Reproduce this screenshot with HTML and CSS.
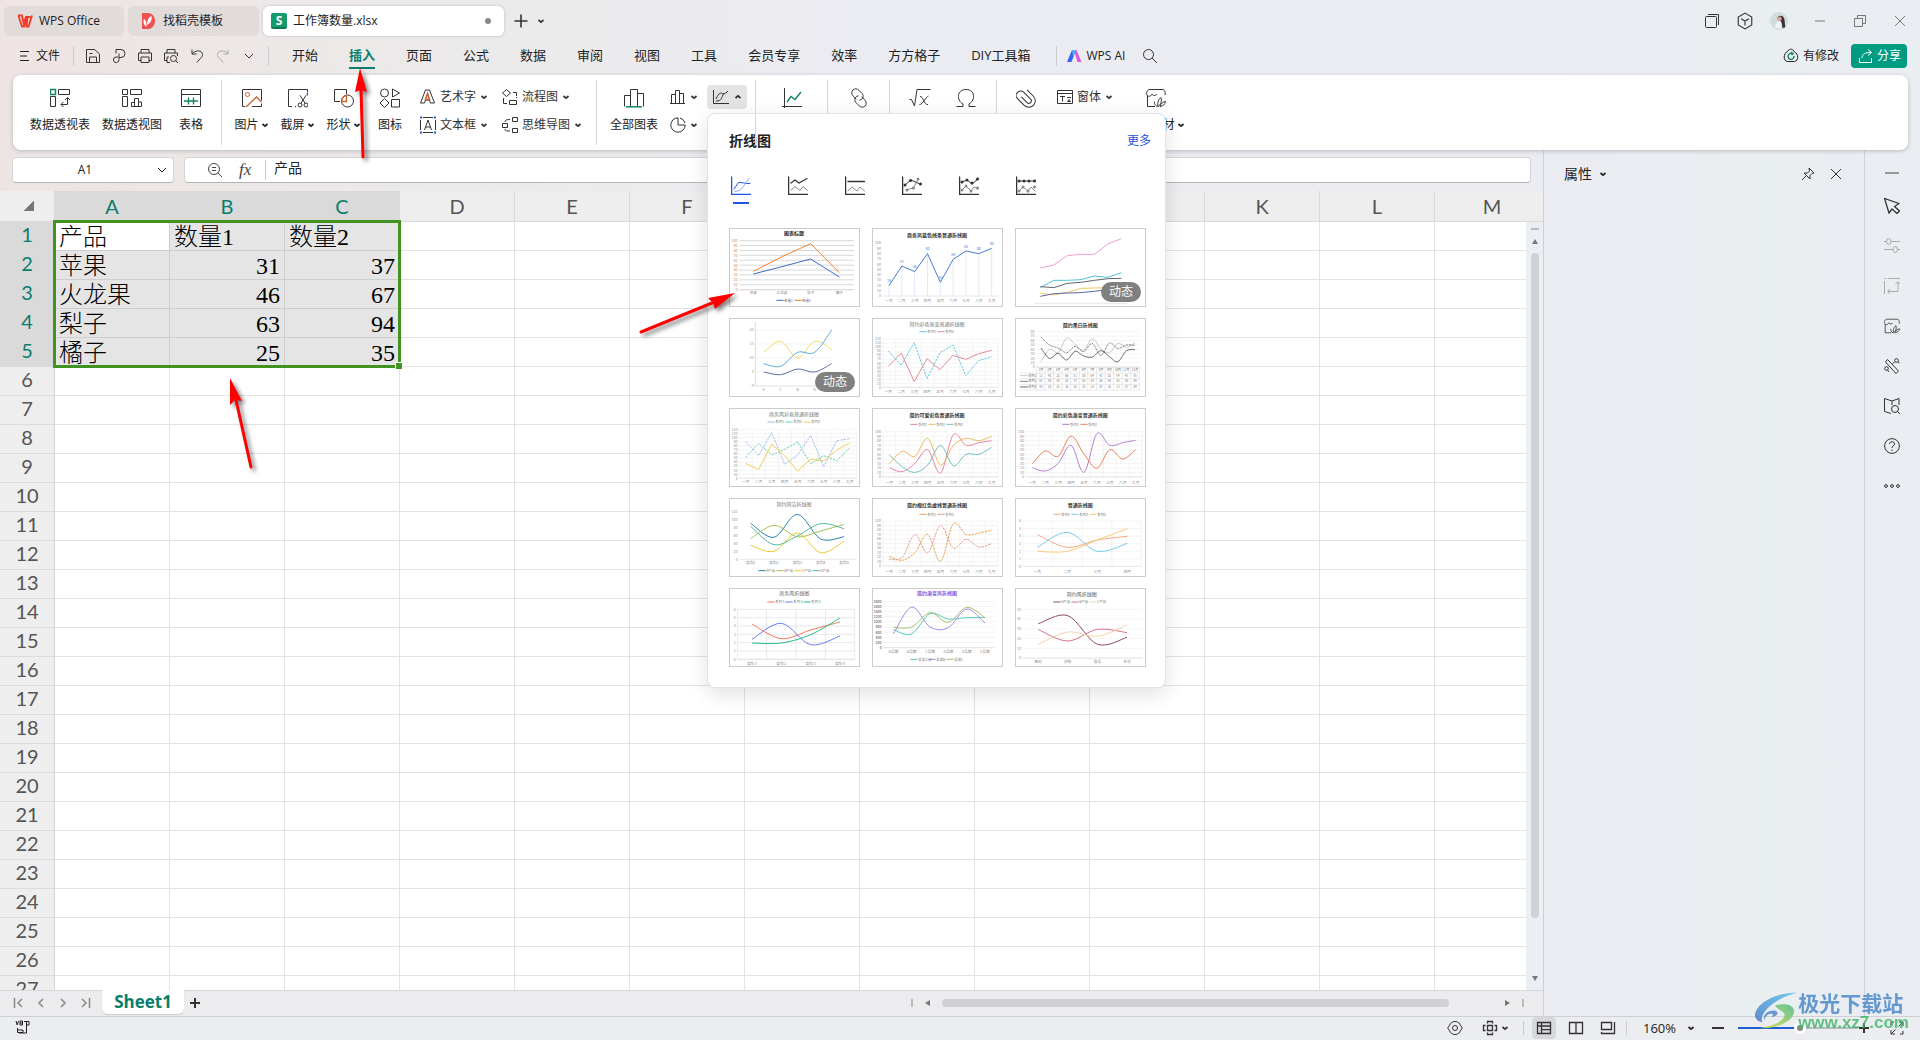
FILE: index.html
```html
<!DOCTYPE html>
<html lang="zh-CN">
<head>
<meta charset="utf-8">
<title>工作簿数量.xlsx</title>
<link rel="stylesheet" href="styles.css">
</head>
<body>
<svg class="sprite" aria-hidden="true">
  <symbol id="chev" viewBox="0 0 10 10"><path d="M2.5 4 5 6.200 7.500 4" stroke-width="1.700"/></symbol>
  <symbol id="chev-up" viewBox="0 0 10 10"><path d="M2.500 6 5 3.800 7.500 6" stroke-width="1.700"/></symbol>
  <symbol id="chev-wide" viewBox="0 0 10 10"><path d="M1 3 5 7 9 3"/></symbol>
  <symbol id="plus" viewBox="0 0 16 16"><path d="M8 1.500v13M1.500 8h13" stroke-width="1.600"/></symbol>
  <symbol id="menu" viewBox="0 0 16 16"><path d="M4 3.500h9M4 8h7M4 12.500h9"/></symbol>
  <symbol id="save" viewBox="0 0 16 16"><path d="M1.500 14.500v-13h8l5 4.500v8.500zM4.500 14v-5h7v5M4.500 5.500h3"/></symbol>
  <symbol id="export" viewBox="0 0 16 16"><path d="M5 5.500V1.500h5a4 4 0 0 1 0 8H8M8 5.500v6a2.800 2.800 0 1 1-3-2.500h2"/></symbol>
  <symbol id="print" viewBox="0 0 16 16"><path d="M4 5V1.500h8V5M4 12.500H1.500V5h13v7.500H12M4 9h8v5.500H4z"/></symbol>
  <symbol id="preview" viewBox="0 0 16 16"><path d="M4 5V1.500h8V5M4 12.500H1.500V5h13v3M7 14.500H4V9h2"/><circle cx="10.500" cy="10.500" r="3"/><path d="m12.700 12.700 2.300 2.300"/></symbol>
  <symbol id="undo" viewBox="0 0 16 16"><path d="M3 1.500V6h4.500M3 6c3-4 10-4.500 10.500.500.200 3-3 4-5.500 8"/></symbol>
  <symbol id="redo" viewBox="0 0 16 16"><path d="M13 1.500V6H8.500M13 6C10 2 3 1.500 2.500 6.500c-.2 3 3 4 5.500 8"/></symbol>
  <symbol id="search" viewBox="0 0 16 16"><circle cx="6.500" cy="6.500" r="5"/><path d="m10 10 5 5"/></symbol>
  <symbol id="pivot" viewBox="0 0 20 20"><g><path d="M8.500 1.500h11v5h-11zM.500 8.500h5v10h-5z"/><path d="M11 16.500h6.500v-7M15 12l2.500-2.500L20 12M13.500 14 11 16.500l2.500 2.500"/></g><path d="M.500 1.500h5v5h-5z" stroke="#138463" stroke-width="1.500"/></symbol>
  <symbol id="pivotchart" viewBox="0 0 20 20"><path d="M.500 1.500h5v5h-5zM8.500 1.500h11v5h-11zM.500 8.500h5v10h-5zM9.500 18.500v-4h3v-4h4v4M9.500 18.500h10v-4.500h-3v4.500M12.500 14v4.500"/></symbol>
  <symbol id="table" viewBox="0 0 20 20"><path d="M.500 1.500h19v17H.500zM.500 6.500h19"/><path d="M3 13h14M7.500 9.500v7M12.500 9.500v7" stroke="#138463" stroke-width="1.400"/></symbol>
  <symbol id="picture" viewBox="0 0 20 20"><path d="M3 18.500H.500v-17h19v11M10 18.500h9.500v-3"/><circle cx="5.500" cy="6.500" r="2" stroke="#c95f2b"/><path d="m4 19 10.500-10 5 5" stroke="#c95f2b" stroke-width="1.300"/></symbol>
  <symbol id="crop" viewBox="0 0 20 20"><path d="M4 18.500H.500v-17h19v3"/><path d="M7 18.500h1M19.500 5v2.500" stroke="#2459e0" stroke-width="1.600"/><circle cx="12" cy="17" r="2"/><circle cx="18" cy="17" r="2"/><path d="m13 15.300 5-8M17 15.300l-5-8"/></symbol>
  <symbol id="shapes" viewBox="0 0 20 20"><path d="M6 13.500H.500v-12h12V6"/><circle cx="13.500" cy="13" r="6"/><path d="M7.500 13.500a6 6 0 0 1 5-6v6z" stroke="#c95f2b" stroke-width="1.300"/></symbol>
  <symbol id="icons" viewBox="0 0 20 20"><circle cx="4.500" cy="5" r="4"/><path d="M12.500 1v8l7-4zM4.500 10.500l4.500 4.500-4.500 4.500L0 15zM11.500 11.500h8v7.500h-8z"/></symbol>
  <symbol id="wordart" viewBox="0 0 18 18"><path d="M6.500 2h4l5 13h-4l-1-3h-4l-1 3h-4z"/><path d="m8.500 5.500 2 6h-4z" stroke="#c95f2b" stroke-width="1.500"/></symbol>
  <symbol id="textbox" viewBox="0 0 18 18"><path d="M4 1.500h10M4 16.500h10M1.500 4v10M16.500 4v10M5.500 14 9 4l3.500 10M6.500 11h5"/><path d="M1 1.500h2M15 1.500h2M1 16.500h2M15 16.500h2" stroke="#2459e0" stroke-width="2"/></symbol>
  <symbol id="flow" viewBox="0 0 18 18"><path d="m5.500 1.500 4 3.500-4 3.500-4-3.500zM12 4.500h3.500V8M2.500 10v5.500H6M8.500 12.500h7v4h-7zM15.500 9v1"/></symbol>
  <symbol id="mind" viewBox="0 0 18 18"><path d="M1.500 7.500h5v4h-5zM11.500 1.500h5v4h-5zM11.500 12.500h5v4h-5zM4 6c0-2 2-2.500 5-2.500M4 13c0 2 2 2 5 2"/></symbol>
  <symbol id="bars" viewBox="0 0 20 20"><path d="M.500 18.500v-11h6M6.500 18.500v-17h7v17M13.500 5.500h6v13"/><path d="M2 18.800h16" stroke="#138463" stroke-width="1.500"/></symbol>
  <symbol id="bars-s" viewBox="0 0 16 16"><path d="M1.500 14.500v-9h4M5.500 14.500v-13h4v13M9.500 4.500h4v10M0 14.500h15"/></symbol>
  <symbol id="pie" viewBox="0 0 16 16"><path d="M8 .800a7.200 7.200 0 1 0 7.200 7.200H8zM10 1a7 7 0 0 1 5 5"/></symbol>
  <symbol id="line-s" viewBox="0 0 18 16"><path d="M1.500 1v13.500H17M4 10c3-7 5-6 6-5.500s3 1 6-2.500M4 12c6 0 5-3 8-8"/></symbol>
  <symbol id="spark" viewBox="0 0 20 20"><path d="M2.500 0v20M0 18.500h20"/><path d="m5 14 4-5.500 4 3L19 4" stroke="#138463" stroke-width="1.400"/></symbol>
  <symbol id="link" viewBox="0 0 22 22"><g transform="rotate(45 11 11)"><path d="M10 14H5a5 4.500 0 0 1 0-9h5a4.500 4.500 0 0 1 3 7.500"/><path d="M12 8h5a5 4.500 0 0 1 0 9h-5a4.500 4.500 0 0 1-3-7.500"/></g></symbol>
  <symbol id="sqrt" viewBox="0 0 22 20"><path d="M.500 11.500h2l3 6.500 2.500-16.500h13.500M11 8.500c3-1 4 9 8 8M19.500 8c-2 0-6 9-9 8.500"/></symbol>
  <symbol id="omega" viewBox="0 0 20 20"><path d="M.500 18.500h6.500v-2.500C0 12 1 1.500 10 1.500s10 10.500 3 14.500v2.500h6.500"/></symbol>
  <symbol id="clip" viewBox="0 0 20 20"><g transform="rotate(-45 10 10)"><path d="M7.500 6v8a2.500 2.500 0 0 0 5 0V4.500a4.500 4.500 0 0 0-9 0v9.500a6.500 6.500 0 0 0 13 0V5"/></g></symbol>
  <symbol id="form" viewBox="0 0 18 16"><path d="M1.500 1.500h15v13h-15zM1.500 4.500h15M4 7.500h5M6.500 7.500v5M11 8.500h4M11.500 12.500l1.500-2 1.500 2z"/></symbol>
  <symbol id="material" viewBox="0 0 20 20"><path d="M9 18.500H1.500V8C-.5 5 1 1.500 4 1.500h12c3 0 3.500 3 3 5.500M1.500 8c3 1 4-1 4.500-2 1 2 4 2 5 0M12 18.500c-1-4 1-8 3-9 1 3 0 7-3 9zM14 18.500c1-3 3-5 5.500-5-.5 3-3 5-5.500 5zM11.500 18.500c-3-1-3-3-3-5"/></symbol>
  <symbol id="zoomout" viewBox="0 0 16 16"><circle cx="7" cy="7" r="5.500"/><path d="M5 5.500h4M5 8.500h4M11 11l4 4"/></symbol>
  <symbol id="cube" viewBox="0 0 16 16"><path d="m8 1 6 3.500v7L8 15l-6-3.500v-7zM4.500 6 8 8l3.500-2M8 8v4"/></symbol>
  <symbol id="pages" viewBox="0 0 16 16"><rect x="1.500" y="3.500" width="11" height="11" rx="1"/><path d="M4 1.500h10.500V12"/></symbol>
  <symbol id="min" viewBox="0 0 16 16"><path d="M3 8h10"/></symbol>
  <symbol id="restore" viewBox="0 0 16 16"><path d="M2.500 5.500h8v8h-8zM5.500 5.500v-3h8v8h-3"/></symbol>
  <symbol id="close" viewBox="0 0 16 16"><path d="m3 3 10 10M13 3 3 13"/></symbol>
  <symbol id="pin" viewBox="0 0 16 16"><path d="m9 2 5 5-2 .500-2 2 0 3.500-6-6 3.500 0 2-2zM6 10l-4 4"/></symbol>
  <symbol id="cloud" viewBox="0 0 16 16"><path d="M5 3c2-3 5-2 6.500 1 4 1.500 4.500 9 0 9.500h-7C0 13 0 5.500 5 3z"/><path d="M9 5.500A3 3 0 1 0 11 8M8 4l2 1.500L8.500 7" stroke="#138463" stroke-width="1.400"/></symbol>
  <symbol id="share" viewBox="0 0 16 16"><path d="M1.500 10v4.500h12V10M4 10c0-4 3-5.500 9-5.500M10 1.500l3.500 3-3.500 3"/></symbol>
  <symbol id="cursor" viewBox="0 0 16 16"><path d="M.500.500 5 15l3-4 5 4.500 2.500-2.500-5-4.500 4.500-3z" stroke-width="1.300"/></symbol>
  <symbol id="sliders" viewBox="0 0 16 16"><path d="M0 3.500h2.500M7 3.500h9M0 11.500h9M13.500 11.500H16"/><ellipse cx="4.700" cy="3.500" rx="2.200" ry="3"/><ellipse cx="11.300" cy="11.500" rx="2.200" ry="3"/></symbol>
  <symbol id="resize" viewBox="0 0 16 16"><path d="M0 .500h1.500M3.500.500H16M.500 3v13M14 4v9.500H4M11.500 6 14 3.500 16 6M6 11l-2.500 2.500L6 16"/></symbol>
  <symbol id="tools" viewBox="0 0 16 16"><path d="m3.500 1.500 11 11.500-2.500 2.500L1.500 4z"/><path d="m8.500 6 2-2"/><circle cx="12.500" cy="2.500" r="1.800"/><circle cx="2.500" cy="10.500" r="1.800"/><path d="m3.500 12 1.500 2M14 4l1.500 1" /></symbol>
  <symbol id="book" viewBox="0 0 16 16"><path d="M8 3 .500.500v13L7 15.500M8 3l7-2.500V7M8 3v4"/><circle cx="11" cy="11" r="3.500"/><path d="m13.500 13.500 2.500 2.500"/></symbol>
  <symbol id="help" viewBox="0 0 16 16"><circle cx="8" cy="8" r="7.400"/><path d="M5.500 6c0-3 5-3 5 0 0 2-2.500 1.500-2.500 4M8 11.500V13"/></symbol>
  <symbol id="dots" viewBox="0 0 16 16"><circle cx="2" cy="8" r="1.400"/><circle cx="8" cy="8" r="1.400"/><circle cx="14" cy="8" r="1.400"/></symbol>
  <symbol id="vb" viewBox="0 0 16 16"><path d="m1 1 1.200 4L3.500 1M5 1v4h2.500V1zM5 3h2M9 1.500h5V5h-3M11.500 2v11H4M2.500 8v4.500h5.500V10H2.500"/></symbol>
  <symbol id="eye" viewBox="0 0 16 16"><path d="M.700 8 4 3c2-2 6-2 8 0l3.300 5L12 13c-2 2-6 2-8 0z"/><circle cx="8" cy="8" r="2.500"/></symbol>
  <symbol id="move" viewBox="0 0 16 16"><path d="M5.500 5.500h5v5h-5zM5.500 3.500v-2h5v2M5.500 12.500v2h5v-2M3.500 5.500h-2v5h2M12.500 5.500h2v5h-2" stroke-width="1.300"/></symbol>
  <symbol id="v1" viewBox="0 0 16 16"><path d="M1.500 2.500h13v11h-13zM1.500 6h13M5.500 2.500v11M5.500 9.700h9" stroke-width="1.300"/></symbol>
  <symbol id="v2" viewBox="0 0 16 16"><path d="M1.500 2.500h13v11h-13zM8 2.500v11" stroke-width="1.300"/></symbol>
  <symbol id="v3" viewBox="0 0 16 16"><path d="M1.500 2.500h10v7h-10zM14.500 2v11.500h-13V12" stroke-width="1.300"/></symbol>
  <symbol id="full" viewBox="0 0 16 16"><path d="M10 2h4v4M14 2l-4.500 4.500M6 14H2v-4M2 14l4.500-4.500M2 5V2h3M14 11v3h-3"/></symbol>
  <symbol id="t1" viewBox="0 0 20 20"><path d="M.600 1v17.400H20" stroke-width="1.300"/><path d="m3 13 4.500-6.500C11 6 14 8 19 7.500"/><path d="M4 15.500c8-1 7-4 14-13" stroke="#8ba7ef"/></symbol>
  <symbol id="t2" viewBox="0 0 20 20"><path d="M.600 1v17.400H20" stroke-width="1.300"/><path d="m3 7 4-3 4 3 8-4.500" stroke-width="1.300"/><path d="m3 14 4-3.500 5 4 3-4 4.500 4" stroke="#888"/></symbol>
  <symbol id="t3" viewBox="0 0 20 20"><path d="M.600 1v17.400H20" stroke-width="1.300"/><path d="M3 5.500h16.500" stroke-width="1.300"/><path d="m3 15 4-4 5 4 3-4 4.500 4" stroke="#888"/></symbol>
  <symbol id="t4" viewBox="0 0 20 20"><path d="M.600 1v17.400H20" stroke-width="1.300"/><path d="m4 14 7-2 5-8" stroke="#888"/><path d="m3 9 6-5 9 4"/><path d="M5 14h.01M11.500 12h.01M16 3h.01" stroke="#888" stroke-width="3"/><path d="M3 9h.01M8.500 4.500h.01M18.500 8h.01" stroke-width="3"/></symbol>
  <symbol id="t5" viewBox="0 0 20 20"><path d="M.600 1v17.400H20" stroke-width="1.300"/><path d="m3 14 4-4 5 5 3-4 4 2" stroke="#888"/><path d="m3 6 5-2 5 4 6-5"/><path d="M3 14h.01M7 10h.01M12 15h.01M18.500 12h.01" stroke="#888" stroke-width="3"/><path d="M3 6h.01M8 4h.01M13 7h.01M18.500 3h.01" stroke-width="3"/></symbol>
  <symbol id="t6" viewBox="0 0 20 20"><path d="M.600 1v17.400H20" stroke-width="1.300"/><path d="m3 15 4-4 5 4 3-4 4 4" stroke="#888"/><path d="M3 5h16"/><path d="M3 15h.01M7 11h.01M12 15h.01M18.500 11h.01" stroke="#888" stroke-width="3"/><path d="M3 5h.01M8 5h.01M13 5h.01M18.500 5h.01" stroke-width="3"/></symbol>
</svg>

<header class="titlebar">
  <button class="doc-tab doc-home"><svg class="logo" viewBox="0 0 16 14"><path d="M1 1.500h4L6.500 9 9 3h4.500M1.500 2l3.500 10.500h2L10.500 4l-1 8.500h2L15 1.500" fill="none" stroke="#f03a26" stroke-width="1.800"/></svg>WPS Office</button>
  <button class="doc-tab doc-template"><svg class="logo" viewBox="0 0 16 16"><path d="M1 0h6a7 8 0 0 1 0 16H1z" fill="#ee5253"/><path d="M5.500 14C2 11 2 8 3 6c2 1 2.500 4 2.500 8zM6 12c0-5 2-8 4.500-9C11 7 10 10 6 12z" fill="#fff"/></svg>找稻壳模板</button>
  <button class="doc-tab doc-active"><span class="sheet-logo">S</span>工作簿数量.xlsx<i class="dirty"></i></button>
  <button class="tool tab-add" aria-label="新建"><svg class="i16"><use href="#plus"/></svg></button>
  <button class="tool" aria-label="标签列表"><svg class="i10"><use href="#chev"/></svg></button>
  <div class="window-tools">
    <button class="tool" aria-label="工作区"><svg class="i16"><use href="#pages"/></svg></button>
    <button class="tool" aria-label="应用"><svg class="i18"><use href="#cube"/></svg></button>
    <svg class="avatar" viewBox="0 0 20 20"><circle cx="10" cy="10" r="10" fill="#cfdde0"/><path d="M8 7c1-4 7-4 8 1l1 9-3 1-1-6z" fill="#3b2f3c"/><circle cx="10.500" cy="7.500" r="2.500" fill="#d9a796"/><path d="m8 11 4-1 0 9-7-2z" fill="#f0f4f4"/></svg>
    <button class="tool dim" aria-label="最小化"><svg class="i16"><use href="#min"/></svg></button>
    <button class="tool dim" aria-label="还原"><svg class="i16"><use href="#restore"/></svg></button>
    <button class="tool dim" aria-label="关闭"><svg class="i16"><use href="#close"/></svg></button>
  </div>
</header>

<nav class="menubar">
  <button class="file"><svg class="i16"><use href="#menu"/></svg>文件</button>
  <span class="vline file-line"></span>
  <div class="quick">
    <button class="tool" aria-label="保存"><svg class="i16"><use href="#save"/></svg></button>
    <button class="tool" aria-label="输出"><svg class="i16"><use href="#export"/></svg></button>
    <button class="tool" aria-label="打印"><svg class="i16"><use href="#print"/></svg></button>
    <button class="tool" aria-label="预览"><svg class="i16"><use href="#preview"/></svg></button>
    <button class="tool" aria-label="撤销"><svg class="i16"><use href="#undo"/></svg></button>
    <button class="tool faint" aria-label="恢复"><svg class="i16"><use href="#redo"/></svg></button>
    <button class="tool" aria-label="自定义"><svg class="i10 quick-chev"><use href="#chev-wide"/></svg></button>
  </div>
  <span class="vline"></span>
  <div class="menus">
    <button>开始</button><button class="current">插入</button><button>页面</button><button>公式</button><button>数据</button><button>审阅</button><button>视图</button><button>工具</button><button>会员专享</button><button>效率</button><button>方方格子</button><button>DIY工具箱</button>
  </div>
  <span class="vline"></span>
  <button class="ai"><svg class="i16" viewBox="0 0 16 16"><path d="M1 14 6 2h4L5.500 14z" fill="#3a63f5" stroke="none"/><path d="m8 2 2.500 0 5 12h-4z" fill="#e255d8" stroke="none"/><path d="m6 2 4 0-3 7z" fill="#45b7f7" stroke="none"/></svg>WPS AI</button>
  <button class="tool" aria-label="搜索"><svg class="i16"><use href="#search"/></svg></button>
  <button class="changes"><svg class="i16"><use href="#cloud"/></svg>有修改</button>
  <button class="share"><svg class="i16"><use href="#share"/></svg>分享</button>
</nav>

<section class="ribbon">
  <div class="group pivot-group">
    <button class="big wide"><svg class="i20"><use href="#pivot"/></svg><span>数据透视表</span></button>
    <button class="big wide"><svg class="i20"><use href="#pivotchart"/></svg><span>数据透视图</span></button>
    <button class="big"><svg class="i20"><use href="#table"/></svg><span>表格</span></button>
  </div>
  <div class="group">
    <button class="big"><svg class="i20"><use href="#picture"/></svg><span>图片<svg class="i10"><use href="#chev"/></svg></span></button>
    <button class="big"><svg class="i20"><use href="#crop"/></svg><span>截屏<svg class="i10"><use href="#chev"/></svg></span></button>
    <button class="big"><svg class="i20"><use href="#shapes"/></svg><span>形状<svg class="i10"><use href="#chev"/></svg></span></button>
    <button class="big"><svg class="i20"><use href="#icons"/></svg><span>图标</span></button>
    <div class="stack text-stack">
      <button class="mini"><svg class="i18"><use href="#wordart"/></svg>艺术字<svg class="i10"><use href="#chev"/></svg></button>
      <button class="mini"><svg class="i18"><use href="#textbox"/></svg>文本框<svg class="i10"><use href="#chev"/></svg></button>
    </div>
    <div class="stack flow-stack">
      <button class="mini"><svg class="i18"><use href="#flow"/></svg>流程图<svg class="i10"><use href="#chev"/></svg></button>
      <button class="mini"><svg class="i18"><use href="#mind"/></svg>思维导图<svg class="i10"><use href="#chev"/></svg></button>
    </div>
  </div>
  <div class="group chart-group">
    <button class="big wide"><svg class="i20"><use href="#bars"/></svg><span>全部图表</span></button>
    <div class="stack chart-stack">
      <button class="mini" aria-label="柱形图"><svg class="i16"><use href="#bars-s"/></svg><svg class="i10"><use href="#chev"/></svg></button>
      <button class="mini" aria-label="饼图"><svg class="i16"><use href="#pie"/></svg><svg class="i10"><use href="#chev"/></svg></button>
    </div>
    <div class="stack dropdown">
      <button class="mini open" aria-label="折线图"><svg class="i18"><use href="#line-s"/></svg><svg class="i10"><use href="#chev-up"/></svg></button>
      <div class="gallery">
        <div class="gallery-head"><h2>折线图</h2><a href="#more">更多</a></div>
        <div class="gallery-tabs">
          <button class="on" aria-label="折线图"><svg class="i20"><use href="#t1"/></svg></button>
          <button aria-label="堆积折线图"><svg class="i20"><use href="#t2"/></svg></button>
          <button aria-label="百分比堆积折线图"><svg class="i20"><use href="#t3"/></svg></button>
          <button aria-label="带标记折线图"><svg class="i20"><use href="#t4"/></svg></button>
          <button aria-label="带标记堆积折线图"><svg class="i20"><use href="#t5"/></svg></button>
          <button aria-label="带标记百分比堆积折线图"><svg class="i20"><use href="#t6"/></svg></button>
        </div>
        <div class="thumbs" id="thumbs"></div>
      </div>
    </div>
  </div>
  <div class="group flat"><button class="big wide" aria-label="迷你图"><svg class="i20"><use href="#spark"/></svg></button></div>
  <div class="group flat"><button class="big link" aria-label="超链接"><svg class="i22"><use href="#link"/></svg></button></div>
  <div class="group symbol-group">
    <button class="big" aria-label="公式"><svg class="i22"><use href="#sqrt"/></svg></button>
    <button class="big" aria-label="符号"><svg class="i20"><use href="#omega"/></svg></button>
  </div>
  <div class="group last">
    <button class="big" aria-label="附件"><svg class="i20"><use href="#clip"/></svg></button>
    <div class="stack form-stack"><button class="mini"><svg class="i18"><use href="#form"/></svg>窗体<svg class="i10"><use href="#chev"/></svg></button></div>
    <button class="big link"><svg class="i20"><use href="#material"/></svg><span>更多素材<svg class="i10"><use href="#chev"/></svg></span></button>
  </div>
</section>

<main class="workspace">
  <section class="book">
    <div class="formula-row">
      <div class="name-box"><input aria-label="名称框" value="A1"><svg class="i10"><use href="#chev-wide"/></svg></div>
      <div class="formula-box"><svg class="i16"><use href="#zoomout"/></svg><i class="fx">fx</i><span class="vline"></span><input aria-label="编辑栏" value="产品"></div>
    </div>
    <div class="sheet">
      <table class="cells"><thead id="cols"></thead><tbody id="rows"></tbody></table>
      <div class="selection"></div>
      <div class="vscroll"><i class="split"></i><i class="tri up"></i><i class="thumb"></i><i class="tri down"></i></div>
    </div>
    <div class="sheet-bar">
      <div class="sheet-nav">
        <svg class="i12" viewBox="0 0 12 12"><path d="M1.500 1v10M9 2 5 6l4 4"/></svg>
        <svg class="i12" viewBox="0 0 12 12"><path d="M8 2 4 6l4 4"/></svg>
        <svg class="i12" viewBox="0 0 12 12"><path d="m4 2 4 4-4 4"/></svg>
        <svg class="i12" viewBox="0 0 12 12"><path d="M10.500 1v10M3 2l4 4-4 4"/></svg>
      </div>
      <button class="sheet-tab">Sheet1</button>
      <button class="tool add-sheet" aria-label="新建工作表"><svg class="i12" viewBox="0 0 12 12"><path d="M6 1v10M1 6h10" stroke-width="2"/></svg></button>
      <div class="hscroll"><i class="split"></i><i class="tri left"></i><i class="thumb"></i><i class="tri right"></i><i class="split"></i></div>
    </div>
  </section>
  <aside class="panel">
    <button class="panel-title">属性<svg class="i10"><use href="#chev"/></svg></button>
    <button class="tool" aria-label="固定"><svg class="i16"><use href="#pin"/></svg></button>
    <button class="tool" aria-label="关闭"><svg class="i16"><use href="#close"/></svg></button>
  </aside>
  <aside class="rail">
    <i class="grip"></i>
    <button class="tool" aria-label="选择"><svg class="i16"><use href="#cursor"/></svg></button>
    <button class="tool faint" aria-label="设置"><svg class="i16"><use href="#sliders"/></svg></button>
    <button class="tool faint" aria-label="尺寸"><svg class="i16"><use href="#resize"/></svg></button>
    <button class="tool" aria-label="素材"><svg class="i16"><use href="#material"/></svg></button>
    <button class="tool" aria-label="工具"><svg class="i16"><use href="#tools"/></svg></button>
    <button class="tool" aria-label="查阅"><svg class="i16"><use href="#book"/></svg></button>
    <button class="tool" aria-label="帮助"><svg class="i16"><use href="#help"/></svg></button>
    <button class="tool" aria-label="更多"><svg class="i16"><use href="#dots"/></svg></button>
  </aside>
</main>

<footer class="status">
  <svg class="i16 vb"><use href="#vb"/></svg>
  <button class="tool" aria-label="护眼"><svg class="i16"><use href="#eye"/></svg></button>
  <button class="tool reading" aria-label="阅读模式"><svg class="i16"><use href="#move"/></svg><svg class="i10"><use href="#chev"/></svg></button>
  <span class="vline"></span>
  <div class="views">
    <button class="tool on" aria-label="普通视图"><svg class="i16"><use href="#v1"/></svg></button>
    <button class="tool" aria-label="分页预览"><svg class="i16"><use href="#v2"/></svg></button>
    <button class="tool" aria-label="页面布局"><svg class="i16"><use href="#v3"/></svg></button>
  </div>
  <span class="vline"></span>
  <button class="zoom">160%<svg class="i10"><use href="#chev"/></svg></button>
  <button class="tool" aria-label="缩小"><svg class="i12" viewBox="0 0 12 12"><path d="M0 6h12" stroke-width="2"/></svg></button>
  <input class="zoom-range" type="range" min="10" max="310" value="165" aria-label="缩放">
  <button class="tool" aria-label="放大"><svg class="i12" viewBox="0 0 12 12"><path d="M6 1v10M1 6h10" stroke-width="2"/></svg></button>
  <button class="tool full" aria-label="全屏"><svg class="i16"><use href="#full"/></svg></button>
  <div class="brand">
    <svg class="brand-mark" viewBox="0 0 46 40"><defs><linearGradient id="ga" x1="1" y1="0" x2="0" y2="1"><stop offset="0" stop-color="#55c4ee"/><stop offset="1" stop-color="#3f74c4"/></linearGradient><linearGradient id="gb" x1="1" y1="0" x2="0" y2="1"><stop offset="0" stop-color="#45b880"/><stop offset="1" stop-color="#d6e13a"/></linearGradient></defs><path d="M45 1C24 0 2 12 1 24c0 4 3 7 8 8C4 24 20 7 45 1z" fill="url(#ga)"/><path d="M22 14c8-2 19-2 20 6 0 9-15 19-37 18 15-2 27-8 27-14 0-4-8-5-10-10z" fill="url(#gb)"/><path d="M11 30c-3-6 5-12 12-10 4 2 0 7-6 6 4-1 3-3 1-3-4 0-7 3-7 7z" fill="#4b82cc"/></svg>
    <div class="brand-text"><b>极光下载站</b><span>www.xz7.com</span></div>
  </div>
</footer>

<svg class="arrows" aria-hidden="true">
  <g><path d="M361 88 363 157" /><path class="head" d="M360 68l7 24-6-2-6 2z"/></g>
  <g><path d="m236 400 15 67"/><path class="head" d="m230 378 12 23-7-1-5 5z"/></g>
  <g><path d="m712 303-71 29"/><path class="head" d="m735 293-20 16-2-6-5-5z"/></g>
</svg>
<script src="main.js"></script>
</body>
</html>
```

FILE: styles.css
```css
* { box-sizing: border-box; }
html { overflow: hidden; }
body {
  margin: 0;
  height: 100vh;
  display: flex;
  flex-direction: column;
  overflow: hidden;
  position: relative;
  background: linear-gradient(90deg, #eee4e3 0%, #ece9e8 18%, #ebebed 32%, #ebecf2 45%, #ebecf2 80%, #e9eef1 92%, #eaedf2 100%);
  color: #222;
  font: 12px/18px "Open Sans", "Noto Sans CJK SC", sans-serif;
}
button, input { font: inherit; color: inherit; border: 0; background: none; padding: 0; margin: 0; }
svg { fill: none; stroke: currentColor; stroke-width: 1; flex: none; display: block; }
.sprite { position: absolute; width: 0; height: 0; }
.i10 { width: 10px; height: 10px; }
.i12 { width: 12px; height: 12px; }
.i16 { width: 16px; height: 16px; }
.i18 { width: 18px; height: 18px; }
.i20 { width: 20px; height: 20px; }
.i22 { width: 22px; height: 20px; }
.logo { width: 16px; height: 16px; stroke: none; }
.tool { display: flex; align-items: center; justify-content: center; color: #333; }
.dim { color: #777; }
.faint { color: #aaa; }
.vline { width: 1px; height: 20px; background: #ccc; flex: none; }

/* title bar */
.titlebar { display: flex; align-items: center; height: 36px; padding: 6px 12px 0 4px; flex: none; }
.doc-tab { height: 30px; display: flex; align-items: center; gap: 6px; border-radius: 6px; background: #e1dbda; padding-left: 13px; margin-right: 4px; text-align: left; }
.doc-home { width: 120px; }
.doc-template { width: 131px; }
.doc-active { width: 241px; background: #fff; padding-left: 8px; padding-right: 13px; box-shadow: 0 0 3px #bbb; margin-right: 9px; }
.sheet-logo { width: 16px; height: 16px; border-radius: 2px; background: #139b6b; border-bottom: 2px solid #0b7a52; color: #fff; font: bold 12px/15px "Open Sans", sans-serif; text-align: center; }
.dirty { width: 6px; height: 6px; border-radius: 3px; background: #888; margin-left: auto; }
.tab-add { margin-right: 7px; }
.window-tools { margin-left: auto; display: flex; align-items: center; gap: 24px; padding-bottom: 1px; }
.window-tools .i18 { margin: 0 -8px; }
.avatar { width: 18px; height: 18px; stroke: none; }

/* menu bar */
.menubar { display: flex; align-items: center; height: 39px; padding: 0 13px 0 16px; flex: none; }
.file { display: flex; align-items: center; gap: 4px; width: 57px; }
.quick { display: flex; gap: 10px; padding: 0 11px; }
.quick-chev { margin: 0 3px; }
.menus { display: flex; gap: 31px; padding: 0 25px 0 23px; font-size: 13px; }
.menus button { height: 27px; border-bottom: 2px solid transparent; white-space: nowrap; }
.menus .current { color: #0a7d6c; border-color: #0a7d6c; font-weight: bold; }
.ai { display: flex; align-items: center; gap: 5px; margin: 0 17px 0 9px; }
.changes { display: flex; align-items: center; gap: 4px; margin-left: auto; margin-right: 12px; }
.share { display: flex; align-items: center; gap: 3px; height: 24px; width: 56px; padding-left: 7px; border-radius: 4px; background: #009b81; color: #fff; }

/* ribbon */
.ribbon { display: flex; height: 75px; margin: 0 12px 0 13px; background: #fff; border-radius: 8px; box-shadow: 0 1px 4px #b9b9bf; flex: none; position: relative; z-index: 2; padding-left: 4px; }
.group { display: flex; padding: 0 7px; position: relative; }
.group::after { content: ""; position: absolute; right: 0; top: 5px; height: 65px; width: 1px; background: #d6d6d8; }
.group.flat { padding: 0; }
.group.last { padding-left: 6px; }
.group.last::after { display: none; }
.pivot-group, .symbol-group { padding-right: 8px; }
.chart-group { padding: 0 9px 0 1px; z-index: 3; }
.big { width: 46px; height: 75px; padding-top: 13px; display: flex; flex-direction: column; align-items: center; gap: 8px; color: #333; }
.big span { display: flex; align-items: center; height: 18px; gap: 1px; white-space: nowrap; color: #222; }
.wide { width: 72px; }
.link { width: 62px; }
.stack { display: flex; flex-direction: column; gap: 4px; padding-top: 10px; }
.mini { height: 24px; display: flex; align-items: center; gap: 3px; white-space: nowrap; color: #333; }
.text-stack { width: 88px; padding-left: 6px; }
.flow-stack { width: 89px; }
.chart-stack { width: 37px; }
.form-stack { width: 76px; padding-left: 7px; }
.dropdown { position: relative; width: 40px; }
.open { background: #e3e3e3; border-radius: 4px; padding-left: 5px; width: 40px; }

/* chart gallery */
.gallery { position: absolute; left: 0; top: 38px; width: 459px; background: #fff; border: 1px solid #e2e3e6; border-radius: 8px; box-shadow: 0 6px 20px rgba(0, 0, 0, .12); padding: 17px 20px 20px 21px; }
.gallery-head { display: flex; justify-content: space-between; align-items: center; height: 20px; }
.gallery-head h2 { margin: 0; font-size: 14px; line-height: 20px; font-weight: bold; }
.gallery-head a { color: #1f53e0; text-decoration: none; margin-right: -6px; }
.gallery-tabs { display: flex; align-items: flex-start; gap: 37px; padding: 25px 0 0 2px; height: 77px; }
.gallery-tabs button { width: 20px; color: #333; display: flex; flex-direction: column; align-items: center; gap: 6px; }
.gallery-tabs svg { stroke-linecap: round; }
.gallery-tabs button.on { color: #1f53e0; }
.gallery-tabs .on::after { content: ""; width: 16px; height: 2px; background: #1f53e0; flex: none; }
.thumbs { display: grid; grid-template-columns: repeat(3, 131px); column-gap: 12px; row-gap: 11px; }
.card { height: 79px; border: 1px solid #ccc; position: relative; background: #fff; text-align: center; }
.card svg { width: 129px; height: 77px; stroke: none; font-family: "Noto Sans CJK SC", sans-serif; }
.card em { position: absolute; right: 4px; bottom: 4px; width: 40px; height: 20px; border-radius: 10px; background: #808080; color: #fff; font-style: normal; line-height: 20px; }

/* workbook */
.workspace { flex: 1; min-height: 0; display: flex; }
.book { flex: 1; min-width: 0; display: flex; flex-direction: column; }
.formula-row { display: flex; gap: 10px; padding: 7px 12px 8px; height: 41px; flex: none; }
.name-box, .formula-box { display: flex; align-items: center; height: 26px; background: #fff; border-radius: 4px; border: 1px solid #d5d5d9; border-bottom-color: #b5b5b9; }
.name-box { width: 162px; padding-right: 6px; }
.name-box input { flex: 1; min-width: 0; text-align: center; }
.formula-box { flex: 1; padding-left: 22px; color: #444; }
.fx { font: italic 17px/20px "Liberation Serif", serif; width: 14px; margin: 0 12px 0 16px; }
.formula-box input { flex: 1; font-size: 14px; line-height: 20px; margin: 0 0 4px 8px; color: #222; }
.sheet { flex: 1; min-height: 0; position: relative; overflow: hidden; background: #eee; }
.cells { table-layout: fixed; width: 1550px; border-spacing: 0; border-collapse: separate; }
.cells th, .cells td { padding: 0; height: 29px; border: 0 solid #e2e2e2; border-width: 0 1px 1px 0; overflow: hidden; white-space: nowrap; }
.cells thead th { height: 31px; width: 115px; border-color: #d9d9d9; }
.cells thead th:first-child { width: 55px; }
.cells thead .sel { border-right-color: #dadada; }
.cells th { background: #eee; color: #555; font: 400 20px/28px "Lato", sans-serif; border-color: #d5d5d5; }
.cells th.sel { background: #dadada; color: #0a7d6c; }
.cells tbody th { border-bottom-color: #dcdcdc; line-height: 24px; vertical-align: top; }
.cells tbody .sel { border-bottom-color: #dadada; }
.corner { display: block; width: 10px; height: 10px; margin-left: 24px; background: linear-gradient(135deg, transparent 50%, #777 50%); }
.cells td { background: #fff; font: 300 24px/25px "Liberation Serif", "Noto Sans CJK SC", serif; color: #000; }
.cells td.picked { background: #e5e5e5; border-color: #cecece; padding: 3px 4px 0; }
.cells td.active { background: #fff; }
.cells td.num { text-align: right; }
.selection { position: absolute; left: 53px; top: 29px; width: 348px; height: 148px; border: 3px solid #419322; }
.selection::after { content: ""; position: absolute; right: -4px; bottom: -4px; width: 6px; height: 6px; background: #419322; border: 1px solid #fff; border-width: 1px 0 0 1px; }
.vscroll { position: absolute; right: 0; top: 31px; bottom: 0; width: 17px; background: #ebeef3; display: flex; flex-direction: column; align-items: center; gap: 9px; padding: 6px 0; }
.split { width: 8px; height: 2px; background: #bbb; flex: none; }
.tri { width: 0; height: 0; border: 3px solid transparent; flex: none; }
.tri.up { border-bottom: 5px solid #777; border-top: 0; }
.tri.down { border-top: 5px solid #777; border-bottom: 0; margin: auto 0 3px; }
.tri.left { border-right: 5px solid #777; border-left: 0; }
.tri.right { border-left: 5px solid #777; border-right: 0; margin-left: auto; }
.thumb { background: #d0d1d4; border-radius: 4px; }
.vscroll .thumb { width: 8px; height: 88%; }
.sheet-bar { height: 26px; display: flex; align-items: center; flex: none; border-top: 1px solid #d5d6d9; background: #ececee; padding: 0 0 2px 13px; }
.sheet-nav { display: flex; gap: 10px; width: 89px; color: #888; }
.sheet-nav svg { stroke-width: 1.500; }
.sheet-tab { height: 24px; width: 82px; background: #fff; border-radius: 0 0 6px 6px; box-shadow: 0 1px 1px #ccc; margin-top: -1px; font-size: 17px; line-height: 20px; font-weight: bold; color: #0a7d6c; }
.add-sheet { margin-left: 5px; }
.hscroll { margin-left: auto; width: 632px; display: flex; align-items: center; gap: 12px; padding-right: 19px; }
.hscroll .split { width: 2px; height: 8px; }
.hscroll .thumb { height: 8px; width: 507px; }

/* side areas */
.panel { width: 321px; border-left: 1px solid #cfd0d4; display: flex; align-items: flex-start; padding: 15px 20px 0; }
.panel-title { display: flex; align-items: center; gap: 6px; font-size: 14px; margin-right: auto; }
.panel .tool { margin-left: 12px; height: 18px; }
.rail { width: 56px; border-left: 1px solid #cfd0d4; display: flex; flex-direction: column; align-items: center; gap: 24px; padding: 22px 2px 0 0; }
.grip { width: 14px; height: 2px; background: #999; }

/* status bar */
.status { height: 24px; flex: none; border-top: 1px solid #cfd0d4; display: flex; align-items: center; padding: 0 15px 2px; position: relative; background: #ecedf1; }
.vb { margin-right: auto; }
.reading { margin: 0 13px 0 19px; gap: 2px; }
.status .vline { height: 14px; }
.views { display: flex; gap: 8px; padding: 0 6px 0 8px; }
.views .tool { width: 24px; height: 22px; border-radius: 4px; }
.views .on { background: #d6d8db; }
.zoom { display: flex; align-items: center; gap: 10px; font-size: 13px; margin: 0 16px; }
.zoom-range { appearance: none; width: 120px; height: 12px; margin: 0 0 0 14px; background: linear-gradient(90deg, #1d5fd0 50%, #b9bcc2 50%) center / 100% 2px no-repeat; }
.zoom-range::-webkit-slider-thumb { appearance: none; width: 12px; height: 12px; border-radius: 6px; background: #888; border: 3px solid #fff; }
.full { margin-left: 19px; }
.brand { position: absolute; right: 11px; bottom: 9px; display: flex; opacity: .8; pointer-events: none; }
.brand-mark { width: 44px; height: 40px; stroke: none; }
.brand-text { display: flex; flex-direction: column; white-space: nowrap; }
.brand-text b { font-size: 21px; line-height: 24px; color: #4284c8; }
.brand-text span { font: 17px/16px "Liberation Sans", sans-serif; color: #3fb566; font-weight: bold; }

.arrows { position: absolute; left: 0; top: 0; width: 100%; height: 100%; pointer-events: none; z-index: 5; stroke: #f00; stroke-width: 3; stroke-linecap: round; filter: drop-shadow(3px 3px 2px rgba(0, 0, 0, .5)); }
.head { fill: #f00; stroke: none; }
```

FILE: main.js
```js
const data = [
  ['产品', '数量1', '数量2'],
  ['苹果', 31, 37],
  ['火龙果', 46, 67],
  ['梨子', 63, 94],
  ['橘子', 25, 35]
];
const letters = [...'ABCDEFGHIJKLM'];

document.getElementById('cols').innerHTML = '<tr><th><i class="corner"></i></th>' +
  letters.map((l, i) => `<th class="${i < 3 ? 'sel' : ''}">${l}</th>`).join('') + '</tr>';

let body = '';
for (let r = 0; r < 27; r++) {
  body += `<tr><th class="${r < 5 ? 'sel' : ''}">${r + 1}</th>`;
  for (let c = 0; c < letters.length; c++) {
    const v = data[r] && data[r][c];
    if (v === undefined) { body += '<td></td>'; continue; }
    const kind = r === 0 && c === 0 ? ' active' : typeof v === 'number' ? ' num' : '';
    body += `<td class="picked${kind}">${v}</td>`;
  }
  body += '</tr>';
}
document.getElementById('rows').innerHTML = body;

const months = ['一月', '二月', '三月', '四月', '五月', '六月', '七月', '八月', '九月'];
const months12 = Array.from({ length: 12 }, (_, i) => i + 1 + '月');

/* o: origin, p: plot box [left, right, top, bottom], x: first and last point,
   y: [max, step], s: series [colour, points, style], l: legend, t: title */
const charts = [
  { o: [87, 351], t: ['图表标题', 282, 366, '#222', 1], p: [118, 462, 389, 536], x: [160, 418], y: [100, 10, '#c98a5a'], grid: '#c4c4c4', xl: ['苹果', '火龙果', '梨子', '橘子'], xy: 545,
    s: [['#3f6fd0', [489, 467, 444, 498]], ['#f5822a', [481, 437, 398, 485]]], l: [568, '数量1', '数量2'] },
  { o: [516, 351], t: ['商务风蓝色线条普通折线图', 711, 372, '#333', 1], p: [548, 895, 396, 555], x: [567, 875], y: [100, 10], grid: 'none', xl: months, xy: 570, drop: [19, 57, 46, 80, 26, 69, 85, 80, 90],
    s: [['#4a7dd8', [524, 465, 482, 428, 514, 445, 420, 428, 412]]] },
  { o: [942, 351], p: [1000, 1280, 377, 577], x: [1018, 1261], badge: 1,
    s: [['#f29bd0', [471, 462, 434, 430, 430, 399, 383]], ['#4fc3dc', [529, 508, 508, 506, 495, 499, 485]], ['#5c6670', [527, 530, 517, 514, 508, 503, 502]], ['#f3c860', [547, 552, 544, 532, 531, 530, 535]], ['#5a68a8', [556, 548, 546, 545, 541, 536, 534]]] },
  { o: [87, 624], p: [166, 400, 660, 828], x: [191, 395], y: [20, 5], axis: 1, xl: ['A', 'C', 'B', 'D', 'E'], xy: 838, badge: 1,
    s: [['#f2dc5c', [727, 694, 744, 694, 719], 's'], ['#5aa9dc', [761, 769, 727, 727, 660], 's'], ['#5a6f9c', [786, 794, 777, 786, 761], 's']] },
  { o: [516, 624], t: ['简约彩色渐变普通折线图', 711, 641, '#777'], p: [548, 895, 687, 832], x: [565, 875], y: [120, 10], cols: 9, xl: months, xy: 844,
    s: [['#66c8e4', [723, 766, 698, 806, 728, 705, 797, 752, 740], 'd'], ['#e88a98', [769, 729, 815, 746, 779, 736, 748, 731, 721]]], l: [665, '系列1', '系列2'] },
  { o: [942, 624], t: ['简约黑白折线图', 1138, 646, '#333', 1], p: [1006, 1315, 665, 771], x: [1020, 1302], y: [80, 10], table: 1, w: 2,
    s: [['#aaa', [755, 718, 728, 684, 703, 721, 686, 716, 728, 700, 712, 698], 's'], ['#444', [682, 705, 714, 728, 709, 725, 700, 737, 699, 715, 705, 706], 'sd'], ['#222', [714, 745, 730, 750, 724, 738, 741, 722, 740, 755, 722, 719], 's']] },
  { o: [87, 24], t: ['商务风彩色普通折线图', 282, 41, '#777'], p: [118, 470, 88, 235], x: [137, 449], y: [120, 10], cols: 9, xl: months, xy: 246,
    s: [['#a3bdf2', [125, 167, 98, 193, 165, 106, 201, 122, 116], 'd'], ['#72d3b4', [172, 130, 165, 148, 126, 192, 167, 182, 144], 'd'], ['#f4cf55', [190, 209, 133, 167, 213, 177, 183, 150, 129]]], l: [66, '系列1', '系列2', '系列3'] },
  { o: [516, 24], t: ['简约可爱彩色普通折线图', 711, 46, '#333', 1], p: [548, 895, 95, 231], x: [568, 875], y: [100, 10], cols: 9, xl: months, xy: 247,
    s: [['#ea7fa2', [203, 215, 190, 149, 219, 104, 136, 128, 122], 's'], ['#efbb5b', [191, 154, 169, 115, 195, 136, 115, 122, 109], 's'], ['#70c0bf', [164, 200, 217, 195, 136, 197, 163, 163, 142], 's']], l: [73, '系列1', '系列2', '系列3'] },
  { o: [942, 24], t: ['简约彩色渐变普通折线图', 1138, 46, '#333', 1], p: [974, 1324, 95, 231], x: [994, 1304], y: [100, 10], cols: 9, xl: months, xy: 247,
    s: [['#b07fd0', [203, 213, 190, 136, 217, 101, 136, 128, 121], 's'], ['#ec8158', [191, 153, 169, 108, 162, 205, 149, 177, 149], 's']], l: [73, '系列1', '系列2'] },
  { o: [87, 297], t: ['简约简洁折线图', 282, 314, '#777'], p: [118, 470, 337, 481], x: [152, 432], y: [120, 20], grid: 'none', xl: ['类别1', '类别2', '类别3', '类别4', '类别5'], xy: 492,
    s: [['#2886ae', [373, 415, 346, 420, 413], 's'], ['#a4c252', [419, 379, 413, 396, 376], 's'], ['#f0c92f', [439, 457, 402, 461, 427], 's'], ['#4ebb9e', [382, 437, 411, 374, 389], 's']], l: [515, 'A产品', 'B产品', 'C产品', 'D产品'] },
  { o: [516, 297], t: ['简约橙红色虚线普通折线图', 711, 319, '#333', 1], p: [548, 895, 366, 501], x: [568, 875], y: [100, 10], cols: 9, xl: months, xy: 517,
    s: [['#eba24a', [472, 484, 461, 406, 487, 374, 407, 402, 394], 'sd'], ['#e59b8c', [481, 475, 407, 461, 380, 447, 421, 444, 434], 'sd']], l: [346, '系列1', '系列2'] },
  { o: [942, 297], t: ['普通折线图', 1138, 319, '#333', 1], p: [965, 1322, 366, 502], x: [1009, 1279], y: [6, 1], cols: 4, xl: months.slice(0, 4), xy: 517,
    s: [['#f4a884', [407, 445, 423, 412], 's'], ['#79cdea', [445, 400, 457, 433], 's'], ['#f7cd78', [457, 457, 423, 389], 's']], l: [346, '系列1', '系列2', '系列3'] },
  { o: [87, 568], t: ['商务风折线图', 283, 583, '#666'], p: [112, 464, 632, 782], x: [156, 420], y: [6, 1], grid: '#ddd', cols: 4, xl: ['类别 1', '类别 2', '类别 3', '类别 4'], xy: 795,
    s: [['#f47a5a', [676, 720, 694, 670], 's'], ['#6a7df5', [722, 674, 738, 712], 's'], ['#28bd86', [733, 733, 708, 658], 's']], l: [610, '系列 1', '系列 2', '系列 3'] },
  { o: [516, 568], t: ['简约渐变风折线图', 711, 582, '#8058e0', 1], p: [550, 884, 608, 747], x: [580, 855], y: [1800, 200, '#444'], xl: ['A品牌', 'B品牌', 'C品牌', 'D品牌', 'E品牌', 'F品牌'], xy: 758,
    s: [['#52ccb8', [693, 706, 645, 661, 657, 657], 's'], ['#a58be6', [706, 625, 685, 687, 631, 673], 's'], ['#9fc069', [686, 685, 642, 671, 626, 657], 's']], l: [782, '渠道工具', '渠道B', '渠道C'] },
  { o: [942, 568], t: ['简约风折线图', 1142, 587, '#555'], p: [965, 1324, 632, 778], x: [1012, 1278], y: [50, 10], xl: ['数码', '护肤', '食品', '生活'], xy: 790,
    s: [['#8d4a68', [675, 651, 737, 716], 's'], ['#d7708c', [693, 727, 692, 702], 's'], ['#f6d3ac', [737, 700, 713, 679], 's']], l: [610, 'A产品', 'B产品', 'C产品'] }
];

function label(s, x, y, size, fill, anchor = 'middle', bold) {
  return `<text x="${x}" y="${y + size * 0.37}" font-size="${size}" fill="${fill}" text-anchor="${anchor}"${bold ? ' font-weight="bold"' : ''}>${s}</text>`;
}
function line(x1, y1, x2, y2, c, w = 2) {
  return `<path d="M${x1} ${y1}L${x2} ${y2}" stroke="${c}" stroke-width="${w}"/>`;
}
function trace(pts, smooth) {
  let d = 'M' + pts[0];
  for (let i = 1; i < pts.length; i++) {
    if (!smooth) { d += 'L' + pts[i]; continue; }
    const a = pts[i - 2] || pts[i - 1], b = pts[i - 1], c = pts[i], e = pts[i + 1] || c;
    d += `C${b[0] + (c[0] - a[0]) / 6} ${b[1] + (c[1] - a[1]) / 6} ${c[0] - (e[0] - b[0]) / 6} ${c[1] - (e[1] - b[1]) / 6} ${c}`;
  }
  return d;
}
function draw(ch) {
  const [l, r, t, b] = ch.p;
  let g = '';
  const n = ch.s[0][1].length;
  const xs = Array.from({ length: n }, (_, i) => ch.x[0] + (ch.x[1] - ch.x[0]) * i / (n - 1));
  if (ch.y) {
    const [max, step, c = '#999'] = ch.y;
    for (let v = 0; v <= max; v += step) {
      const y = b - (b - t) * v / max;
      g += line(l, y, r, y, ch.grid || '#eee');
      g += label(v, l - 5, y, 11, c, 'end');
    }
  }
  if (ch.cols) for (let i = 0; i <= ch.cols; i++) g += line(l + (r - l) * i / ch.cols, t, l + (r - l) * i / ch.cols, b, ch.grid || '#eee');
  if (ch.axis) g += line(l, 636, l, b, '#ccc');
  g += line(l, b, r, b, '#ddd');
  if (ch.xl) ch.xl.forEach((s, i) => { g += label(s, xs[i], ch.xy, 11, '#888'); });
  if (ch.table) {
    for (let i = 0; i < 5; i++) g += line(i ? 955 : l, 772 + i * 17, r, 772 + i * 17, '#ddd');
    for (let i = 0; i <= 12; i++) g += line(l + (r - l) * i / 12, t + 106, l + (r - l) * i / 12, 840, '#ddd');
    months12.forEach((m, i) => { g += label(m, xs[i], 780, 9, '#666'); });
    ch.s.forEach((s, k) => {
      g += line(957, 797 + k * 17, 982, 797 + k * 17, s[0]) + label('系列' + (k + 1), 994, 797 + k * 17, 9, '#666');
      s[1].forEach((y, i) => { g += label(Math.round((771 - y) / 106 * 80), xs[i], 797 + k * 17, 9, '#777'); });
    });
  }
  ch.s.forEach(([c, ys, style = '']) => {
    if (ch.drop) ys.forEach((y, i) => { g += line(xs[i], y, xs[i], b, '#d3def6') + label(ch.drop[i], xs[i], y - 14, 11, '#4a7dd8'); });
    g += `<path d="${trace(xs.map((x, i) => [x, ys[i]]), style.includes('s'))}" stroke="${c}" stroke-width="${ch.w || 3}" fill="none"${style.includes('d') ? ' stroke-dasharray="7 3"' : ''}/>`;
  });
  if (ch.t) g += label(ch.t[0], ch.t[1], ch.t[2], 15, ch.t[3], 'middle', ch.t[4]);
  if (ch.l) {
    const [y, ...names] = ch.l;
    const pitch = 54, start = ch.o[0] + 196 - pitch * names.length / 2;
    names.forEach((s, i) => {
      g += line(start + i * pitch, y, start + i * pitch + 22, y, ch.s[i][0], 3) + label(s, start + i * pitch + 24, y, 10, '#777', 'start');
    });
  }
  return `<div class="card"><svg viewBox="${ch.o[0] + 3} ${ch.o[1] + 3} 387 231">${g}</svg>${ch.badge ? '<em>动态</em>' : ''}</div>`;
}
document.getElementById('thumbs').innerHTML = charts.map(draw).join('');
```
